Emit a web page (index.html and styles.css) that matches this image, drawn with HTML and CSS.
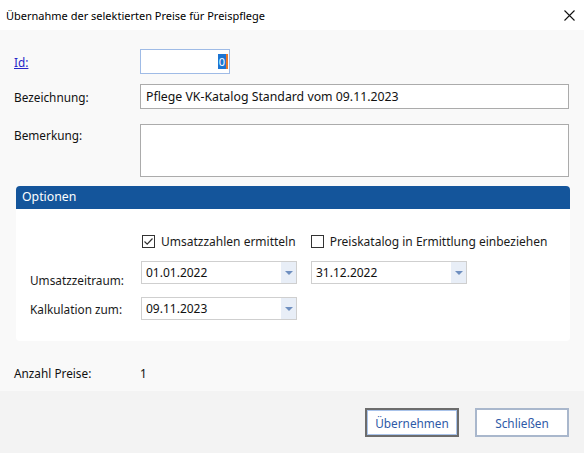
FILE: index.html
```html
<!DOCTYPE html>
<html lang="de">
<head>
<meta charset="utf-8">
<title>Übernahme der selektierten Preise für Preispflege</title>
<link rel="stylesheet" href="styles.css">
</head>
<body>
<div class="dialog">
  <div class="titlebar">
    <span class="title">Übernahme der selektierten Preise für Preispflege</span>
    <svg class="close" width="11" height="11" viewBox="0 0 11 11"><path d="M0.5 0.5 L10.5 10.5 M10.5 0.5 L0.5 10.5" stroke="#111" stroke-width="1.1" fill="none"/></svg>
  </div>
  <div class="body">
    <div class="row row-id">
      <a class="label link" href="#">Id:</a>
      <div class="input input-id"><span class="sel">0</span></div>
    </div>
    <div class="row row-bez">
      <span class="label">Bezeichnung:</span>
      <div class="input input-wide">Pflege VK-Katalog Standard vom 09.11.2023</div>
    </div>
    <div class="row row-bem">
      <span class="label label-top">Bemerkung:</span>
      <div class="input textarea"></div>
    </div>
    <div class="panel">
      <div class="panel-head">Optionen</div>
      <div class="panel-body">
        <div class="prow checks">
          <span class="plabel"></span>
          <label class="check"><span class="box checked"><svg width="11" height="11" viewBox="0 0 11 11"><path d="M1.5 5.5 L4.2 8.2 L9.5 2.5" stroke="#333" stroke-width="1.2" fill="none"/></svg></span>Umsatzzahlen ermitteln</label>
          <label class="check check2"><span class="box"></span>Preiskatalog in Ermittlung einbeziehen</label>
        </div>
        <div class="prow dates">
          <span class="plabel plabel-low">Umsatzzeitraum:</span>
          <div class="combo"><span class="val">01.01.2022</span><span class="arrow"></span></div>
          <div class="combo combo2"><span class="val">31.12.2022</span><span class="arrow"></span></div>
        </div>
        <div class="prow calc">
          <span class="plabel">Kalkulation zum:</span>
          <div class="combo"><span class="val">09.11.2023</span><span class="arrow"></span></div>
        </div>
      </div>
    </div>
    <div class="row row-count">
      <span class="label">Anzahl Preise:</span>
      <span class="count">1</span>
    </div>
  </div>
  <div class="footer">
    <button class="btn btn-default">Übernehmen</button>
    <button class="btn">Schließen</button>
  </div>
</div>
</body>
</html>
```
FILE: styles.css
```css
* { box-sizing: border-box; }
html, body { margin: 0; padding: 0; }
body {
  width: 584px;
  height: 453px;
  overflow: hidden;
  font-family: "Noto Sans", "Open Sans", sans-serif;
  font-size: 11.8px;
  color: #111;
  background: #f9f9f9;
}
.dialog {
  display: flex;
  flex-direction: column;
  height: 453px;
}
.titlebar {
  height: 30px;
  background: #fff;
  display: flex;
  align-items: center;
  justify-content: space-between;
  padding: 0 9px 0 6px;
}
.title { font-size: 11px; color: #000; }
.close { display: block; }
.body {
  flex: 1;
  background: #f9f9f9;
  padding: 19px 14px 0 14px;
  display: flex;
  flex-direction: column;
}
.row {
  display: flex;
  align-items: center;
}
.label {
  width: 126px;
  flex: none;
  color: #111;
}
.link { color: #2626c8; text-decoration: underline; }
.input {
  height: 25px;
  background: #fff;
  border: 1px solid #ababab;
  font-size: 12.3px;
  line-height: 23px;
  padding: 0 5px;
  white-space: nowrap;
}
.input-id {
  width: 90px;
  border-color: #9fbbe6;
  display: flex;
  justify-content: flex-end;
  align-items: center;
  padding: 0 1px 0 0;
}
.sel {
  background: #1c74d2;
  color: #fff;
  font-size: 11px;
  line-height: 15px;
  height: 15px;
  padding: 0 1px;
  border-right: 2px solid #e8762a;
}
.row-bez { margin-top: 10px; }
.input-wide { width: 429px; }
.row-bem { margin-top: 15px; align-items: flex-start; }
.label-top { padding-top: 3px; }
.textarea { width: 429px; height: 53px; }
.panel {
  margin: 9px 0 0 2px;
  width: 554px;
  background: #fff;
  border-radius: 4px;
  overflow: hidden;
}
.panel-head {
  height: 23px;
  background: #14559b;
  color: #fff;
  font-size: 12.3px;
  line-height: 22px;
  padding-left: 6px;
}
.panel-body {
  height: 132px;
  padding: 24px 0 0 14px;
  display: flex;
  flex-direction: column;
}
.prow {
  display: flex;
  align-items: center;
}
.plabel {
  width: 111px;
  flex: none;
  color: #1a1a1a;
}
.check {
  display: flex;
  align-items: center;
  font-size: 12px;
  color: #1a1a1a;
  white-space: nowrap;
}
.box {
  width: 13px;
  height: 13px;
  border: 1px solid #333;
  background: #fff;
  margin-right: 6px;
  flex: none;
  display: flex;
  align-items: center;
  justify-content: center;
}
.check2 { margin-left: 15px; }
.checks .plabel + .check { margin-left: 1px; }
.dates { margin-top: 11px; }
.plabel-low { align-self: flex-end; position: relative; top: 4px; }
.combo {
  width: 156px;
  height: 23px;
  border: 1px solid #cfcfcf;
  background: #fff;
  display: flex;
  align-items: stretch;
}
.combo2 { margin-left: 14px; }
.val {
  flex: 1;
  font-size: 12px;
  line-height: 21px;
  padding-left: 4px;
  color: #111;
}
.arrow {
  width: 15px;
  background: #e8eef7;
  position: relative;
}
.arrow::after {
  content: "";
  position: absolute;
  left: 4px;
  top: 9px;
  border-left: 4px solid transparent;
  border-right: 4px solid transparent;
  border-top: 4px solid #6f8fc0;
}
.calc { margin-top: 13px; }
.row-count { margin-top: 24px; }
.count { color: #111; }
.footer {
  height: 62px;
  background: #f3f3f3;
  display: flex;
  justify-content: flex-end;
  align-items: flex-start;
  padding: 17px 15px 0 0;
  gap: 16px;
}
.btn {
  width: 94px;
  height: 29px;
  background: #fff;
  border: 2px solid #a9b7cc;
  font-family: "Noto Sans", "Open Sans", sans-serif;
  font-size: 11.8px;
  color: #2e5aa8;
  padding: 0;
}
.btn-default {
  border: 2px solid #6c6c6c;
  box-shadow: inset 0 0 0 1px #a9c3ea;
}
```
